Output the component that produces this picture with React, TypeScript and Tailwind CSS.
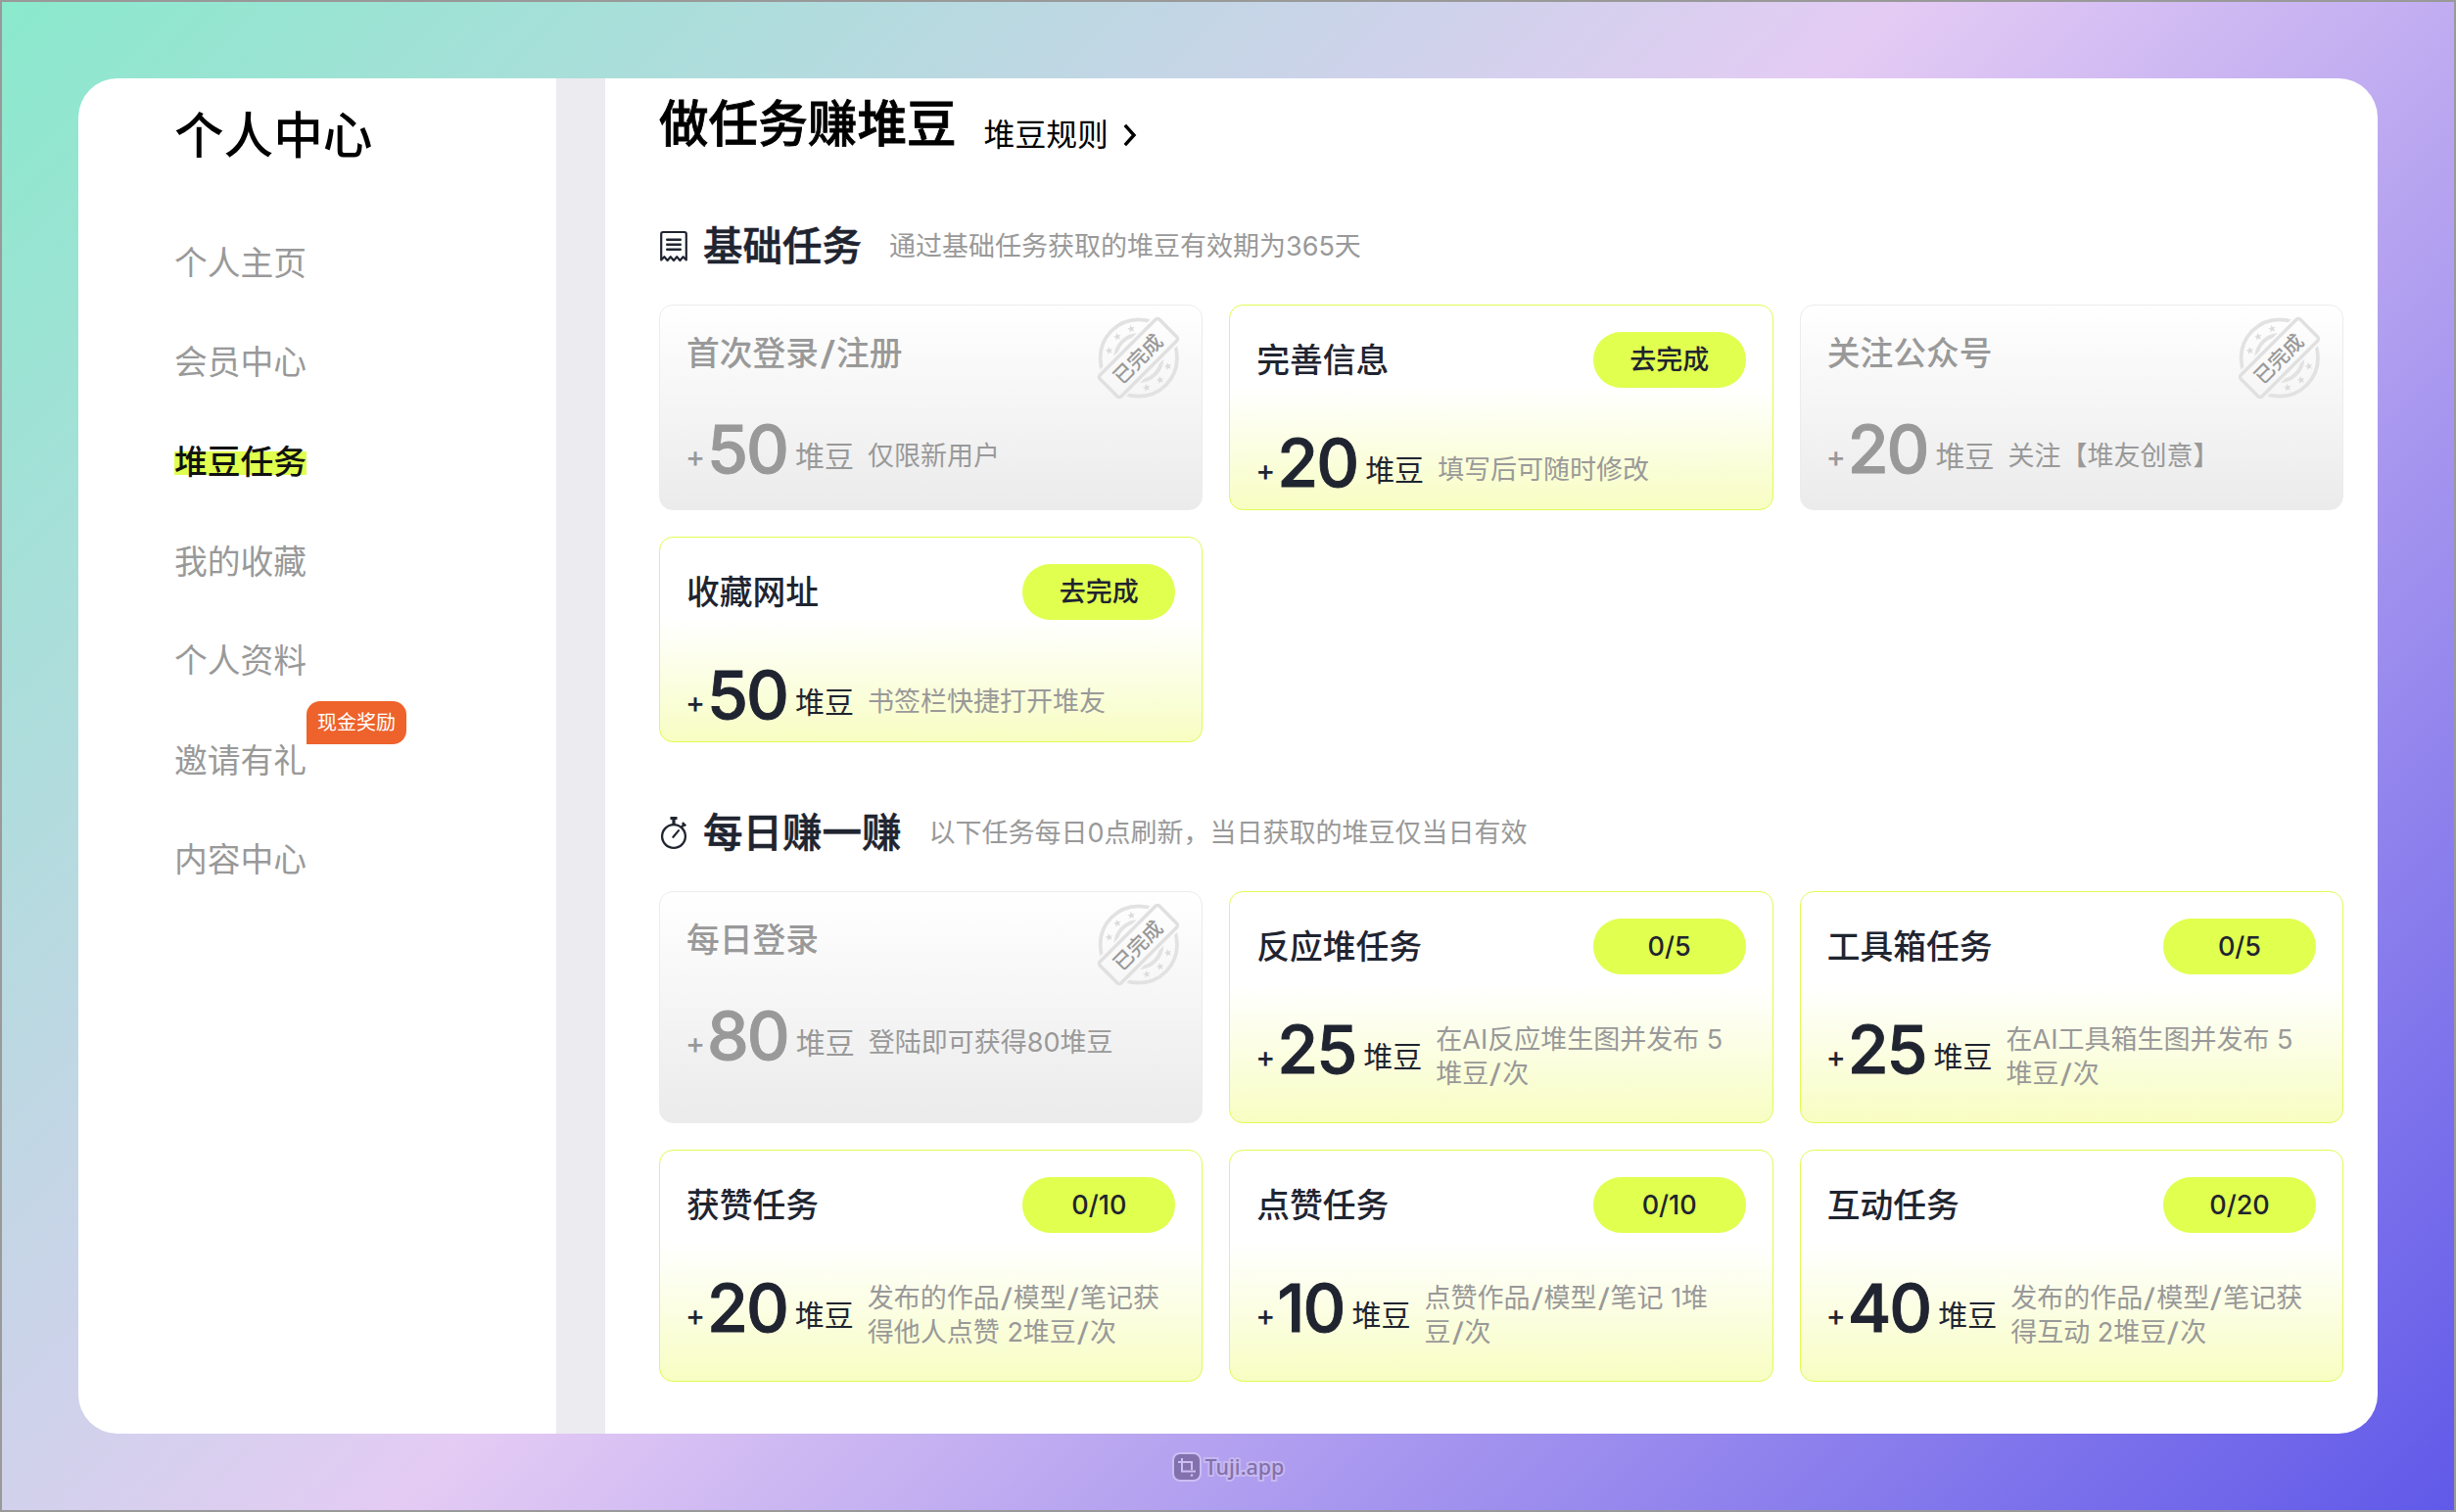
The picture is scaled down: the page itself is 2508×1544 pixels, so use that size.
import React from "react";

type Task = {
  title: string;
  points: number;
  desc: string[];
  action?: string;
};

const basicTasks: Task[] = [
  { title: "首次登录/注册", points: 50, desc: ["仅限新用户"] },
  { title: "完善信息", points: 20, desc: ["填写后可随时修改"], action: "去完成" },
  { title: "关注公众号", points: 20, desc: ["关注【堆友创意】"] },
  { title: "收藏网址", points: 50, desc: ["书签栏快捷打开堆友"], action: "去完成" },
];

const dailyTasks: Task[] = [
  { title: "每日登录", points: 80, desc: ["登陆即可获得80堆豆"] },
  { title: "反应堆任务", points: 25, desc: ["在AI反应堆生图并发布 5", "堆豆/次"], action: "0/5" },
  { title: "工具箱任务", points: 25, desc: ["在AI工具箱生图并发布 5", "堆豆/次"], action: "0/5" },
  { title: "获赞任务", points: 20, desc: ["发布的作品/模型/笔记获", "得他人点赞 2堆豆/次"], action: "0/10" },
  { title: "点赞任务", points: 10, desc: ["点赞作品/模型/笔记 1堆", "豆/次"], action: "0/10" },
  { title: "互动任务", points: 40, desc: ["发布的作品/模型/笔记获", "得互动 2堆豆/次"], action: "0/20" },
];

const navItems = ["个人主页", "会员中心", "堆豆任务", "我的收藏", "个人资料", "邀请有礼", "内容中心"];

const STAR = "M0 -3.9 L1.1 -1.3 L3.8 -1.1 L1.7 0.6 L2.4 3.3 L0 1.8 L-2.4 3.3 L-1.7 0.6 L-3.8 -1.1 L-1.1 -1.3 Z";
const starSpots = [[35.2, 12.7], [21, 20.7], [12.6, 35], [72.7, 51], [64.7, 65], [50.9, 72.7]];

// Widens every slash and gives it a little air on both sides.
function Slashed({ text }: { text: string }) {
  return (
    <>
      {text.split("/").map((part, i) => (
        <React.Fragment key={i}>
          {i > 0 && <span className="mx-[0.08em] inline-block scale-x-130">/</span>}
          {part}
        </React.Fragment>
      ))}
    </>
  );
}

function DoneStamp() {
  return (
    <svg viewBox="0 0 85 85" className="absolute top-[11px] right-[22px] h-[85px] w-[85px] overflow-visible" fill="none">
      <defs>
        <clipPath id="stamp-sides">
          <path d="M-20 78 L78 -20 L-20 -20 Z M7 105 L105 7 L105 105 Z" />
        </clipPath>
      </defs>
      <g clipPath="url(#stamp-sides)">
        <circle cx="42.8" cy="42.5" r="39.2" stroke="#e2e2e2" strokeWidth="3.8" />
        <circle cx="42.8" cy="42.5" r="23.6" stroke="#e2e2e2" strokeWidth="4" />
      </g>
      {starSpots.map(([x, y]) => (
        <path key={x} d={STAR} transform={`translate(${x} ${y}) rotate(-12)`} fill="#dcdcdc" />
      ))}
      <g transform="rotate(-45 42.5 42.5)">
        <rect x="-0.4" y="27.2" width="85.8" height="30.6" rx="2.8" stroke="#e0e0e0" strokeWidth="3.4" />
        <text x="41.5" y="50.2" textAnchor="middle" fontSize="20.5" fontWeight="500" fill="#999">已完成</text>
      </g>
    </svg>
  );
}

function TaskCard({ task, tall }: { task: Task; tall?: boolean }) {
  const done = !task.action;
  const tone = done ? "border-[#ececec] bg-linear-to-b from-white to-[#ebebeb] text-[#999]" : "border-[#e0fb55] bg-linear-to-b from-white from-40% to-[#f8fdc2] text-[#1f2430]";
  return (
    <article className={`relative flex flex-col rounded-[14px] border-[1.5px] px-[27px] pt-[27px] ${tone} ${tall ? "h-[237px]" : "h-[210px]"}`}>
      <header className={`flex items-center justify-between ${done ? "h-[43px]" : "h-[57px]"}`}>
        <h3 className="text-[33.75px] leading-[44px] font-medium"><Slashed text={task.title} /></h3>
        {task.action && (
          <button className="flex h-[57px] w-[156px] items-center justify-center rounded-full bg-[#e0ff4f] text-[27px] leading-[36px] font-medium text-[#1f2430]">
            {task.action}
          </button>
        )}
      </header>
      <div className="mt-[32px] flex h-[80px]">
        <span className="mt-[35px] -ml-px w-[22px] text-[30px] leading-[34px] font-medium">+</span>
        <span className="mt-[4px] text-[68px] leading-[80px] font-medium tracking-[-2px] [-webkit-text-stroke:0.9px_currentColor]">{task.points}</span>
        <span className="mt-[32px] ml-[8px] text-[30px] leading-[40px]">堆豆</span>
        <p className={`ml-[14px] text-[27px] leading-[35px] whitespace-nowrap ${tall && !done ? "mt-[17px]" : "mt-[34px]"} text-[#999]`}>
          {task.desc.map((line) => (
            <span key={line} className="block"><Slashed text={line} /></span>
          ))}
        </p>
      </div>
      {done && <DoneStamp />}
    </article>
  );
}

function ReceiptIcon() {
  return (
    <svg viewBox="0 0 30 34" className="h-[34px] w-[30px]" fill="none" stroke="#1f2430" strokeWidth="2.2" strokeLinejoin="round">
      <path d="M2.2 30.5 V4 Q2.2 2 4.2 2 H25.8 Q27.8 2 27.8 4 V30.5 L24.6 27.2 L21.4 31 L18.2 27.2 L15 31 L11.8 27.2 L8.6 31 L5.4 27.2 Z" />
      <path d="M8.2 9.8 H21.8 M8.2 14.8 H21.8 M8.2 19.8 H21.8" strokeWidth="2.4" strokeLinecap="round" />
    </svg>
  );
}

function StopwatchIcon() {
  return (
    <svg viewBox="0 0 30 34" className="h-[34px] w-[30px]" fill="none" stroke="#1f2430" strokeWidth="2.3">
      <circle cx="15" cy="20" r="11.9" />
      <path d="M11.5 1.4 H18.5 M15 1.4 V8" strokeWidth="3.2" />
      <path d="M23.8 6.2 L27.2 9.4 M25.4 8 L23 10.6" strokeWidth="2.4" />
      <path d="M14.4 20.8 L20 14.1" strokeWidth="2.2" strokeLinecap="round" />
    </svg>
  );
}

function SectionHead({ icon, title, note }: { icon: React.ReactNode; title: string; note: string }) {
  return (
    <div className="flex h-[56px] items-center pt-[2px]">
      {icon}
      <h2 className="ml-[15px] text-[40.5px] leading-[54px] font-medium text-[#1f2430] [-webkit-text-stroke:0.6px_currentColor]">{title}</h2>
      <p className="ml-[28px] text-[27px] leading-[36px] text-[#999]">{note}</p>
    </div>
  );
}

export default function App() {
  return (
    <div className="flex h-[1544px] w-[2508px] flex-col items-center border-2 border-[#999] bg-[linear-gradient(135deg,#8ae9cc_0%,#e4cbf4_48%,#6059e9_100%)] pt-[78px] font-['Inter','Noto_Sans_CJK_SC',sans-serif]">
      <div className="flex h-[1384px] w-[2348px] shrink-0 overflow-hidden rounded-[40px] bg-white">
        <aside className="w-[488px] shrink-0 pl-[98px]">
          <h1 className="mt-[24px] text-[50.6px] leading-[70px] font-medium text-black">个人中心</h1>
          <nav className="mt-[44px] flex flex-col">
            {navItems.map((item) => (
              <div key={item} className="flex h-[101.6px] items-center">
                <span className="relative text-[33.75px] leading-[48px] text-[#999]">
                  {item === "堆豆任务" ? (
                    <span className="bg-[linear-gradient(#e0ff4f,#e0ff4f)] bg-[length:100%_24px] bg-[position:0_60%] bg-no-repeat font-medium text-[#111]">{item}</span>
                  ) : (
                    item
                  )}
                  {item === "邀请有礼" && (
                    <span className="absolute -top-[37px] left-full flex h-[44px] w-[102px] items-center justify-center rounded-[14px] rounded-bl-none bg-[#ee622b] text-[20px] leading-[28px] text-white">
                      现金奖励
                    </span>
                  )}
                </span>
              </div>
            ))}
          </nav>
        </aside>
        <div className="w-[50px] shrink-0 bg-[#ecebf0]" />
        <main className="w-[1775px] shrink-0 pl-[55px]">
          <div className="flex pt-[11px]">
            <h1 className="text-[50.6px] leading-[72px] font-medium text-black [-webkit-text-stroke:0.8px_currentColor]">做任务赚堆豆</h1>
            <a className="mt-[25px] ml-[28px] flex h-[44px] items-center text-[31.8px] leading-[44px] text-black">
              堆豆规则
              <svg viewBox="0 0 14 24" className="ml-[15px] h-[24px] w-[14px]" fill="none" stroke="#000" strokeWidth="3.4">
                <path d="M1.8 1.8 L11 12 L1.8 22.2" />
              </svg>
            </a>
          </div>
          <section className="mt-[60px]">
            <SectionHead icon={<ReceiptIcon />} title="基础任务" note="通过基础任务获取的堆豆有效期为365天" />
            <div className="mt-[32px] grid w-[1720px] grid-cols-3 gap-[27px]">
              {basicTasks.map((t) => <TaskCard key={t.title} task={t} />)}
            </div>
          </section>
          <section className="mt-[64px]">
            <SectionHead icon={<StopwatchIcon />} title="每日赚一赚" note="以下任务每日0点刷新，当日获取的堆豆仅当日有效" />
            <div className="mt-[32px] grid w-[1720px] grid-cols-3 gap-[27px]">
              {dailyTasks.map((t) => <TaskCard key={t.title} task={t} tall />)}
            </div>
          </section>
        </main>
      </div>
      <footer className="mt-[20px] flex h-[28px] items-center gap-[4px]">
        <svg viewBox="0 0 30 30" className="h-[30px] w-[30px]" fill="none">
          <rect x="1" y="1" width="28" height="28" rx="7" fill="#8271ad" stroke="#cbbef3" strokeWidth="2" />
          <path d="M10 6 V19.5 H24 M6 10 H20 V18" stroke="#cbbef3" strokeWidth="2" />
          <circle cx="20" cy="23.5" r="1.3" fill="#cbbef3" />
        </svg>
        <span className="font-['Noto_Sans',sans-serif] text-[21.5px] leading-[28px] font-medium text-[#8271ad] [paint-order:stroke_fill] [-webkit-text-stroke:4px_#c6b8f1]">Tuji.app</span>
      </footer>
    </div>
  );
}
